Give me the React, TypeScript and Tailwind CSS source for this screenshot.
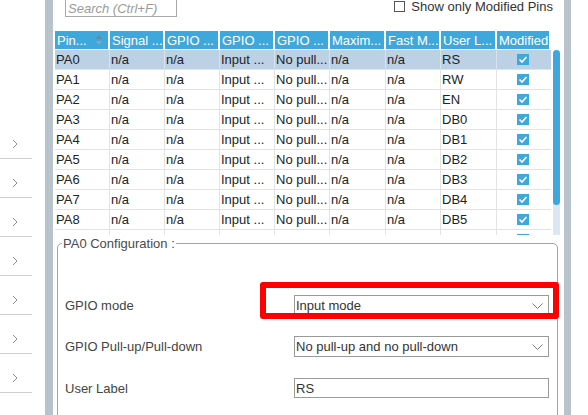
import React from 'react';

const COLS = [55, 55, 55, 55, 55, 56, 55, 56, 54];
const HEADERS = ['Pin...', 'Signal ...', 'GPIO ...', 'GPIO ...', 'GPIO ...', 'Maxim...', 'Fast M...', 'User L...', 'Modified'];

const PINS: [string, string][] = [
  ['PA0', 'RS'],
  ['PA1', 'RW'],
  ['PA2', 'EN'],
  ['PA3', 'DB0'],
  ['PA4', 'DB1'],
  ['PA5', 'DB2'],
  ['PA6', 'DB3'],
  ['PA7', 'DB4'],
  ['PA8', 'DB5'],
  ['PA9', 'DB6'],
];

function Chevron() {
  return (
    <svg width="6" height="10" viewBox="0 0 6 10" fill="none" stroke="#8c8c8c" strokeWidth="1">
      <polyline points="1,1 5,5 1,9" />
    </svg>
  );
}

function Sidebar() {
  return (
    <div className="w-[45px] shrink-0 bg-white pt-[120px]">
      {Array.from({ length: 7 }).map((_, i) => (
        <div key={i} className="h-[39px] w-[32px] border-b border-[#cfcfcf] pl-[12px] pt-[19px]">
          <Chevron />
        </div>
      ))}
    </div>
  );
}

function CheckedBox() {
  return (
    <span className="flex h-[11px] w-[12px] items-center justify-center bg-[#3ea8dc]">
      <svg width="10" height="9" viewBox="0 0 10 9" fill="none" stroke="white" strokeWidth="1.6">
        <polyline points="1.5,4.5 4,7 8.5,2" />
      </svg>
    </span>
  );
}

function Toolbar() {
  return (
    <div className="flex h-[31px] shrink-0 items-start justify-between pr-[11px]">
      <div className="ml-[10px] mt-[-5px] flex h-[22px] w-[112px] items-end border border-[#a9a9a9] pb-[1px] pl-[2px] italic text-[#9b9b9b]">
        Search (Ctrl+F)
      </div>
      <label className="mt-[-1px] flex items-center gap-[6px] text-[#333]">
        <span className="h-[11px] w-[11px] border border-[#555] bg-white" />
        <span className="mt-[1px]">Show only Modified Pins</span>
      </label>
    </div>
  );
}

function PinTable() {
  return (
    <div className="flex h-[204px] shrink-0 overflow-hidden">
      <div className="w-[496px] shrink-0">
        <div className="mb-[1px] flex h-[18px]">
          {HEADERS.map((h, i) => (
            <div
              key={i}
              style={{ width: COLS[i] }}
              className="flex shrink-0 items-center overflow-hidden whitespace-nowrap border-r-[2px] border-white bg-[#3ea8dc] pl-[2px] text-white"
            >
              {h}
              {i === 0 && (
                <svg className="ml-auto mr-[6px]" width="6" height="11" viewBox="0 0 6 11">
                  <polygon points="3,0 6,4 0,4" fill="#6f8797" />
                  <polygon points="0,6 6,6 3,10" fill="#8fa3b2" />
                </svg>
              )}
            </div>
          ))}
        </div>
        {PINS.map(([pin, label], r) => {
          const cells = [pin, 'n/a', 'n/a', 'Input ...', 'No pull...', 'n/a', 'n/a', label];
          const selected = r === 0;
          const last = r === PINS.length - 1;
          return (
            <div key={pin} className={last ? 'h-[5px] overflow-hidden' : ''}>
              <div className={`flex h-[20px] border-b border-[#e3e3e3] ${selected ? 'bg-[#bcd0e6]' : 'bg-white'}`}>
                {cells.map((c, i) => (
                  <div
                    key={i}
                    style={{ width: COLS[i] }}
                    className={`flex shrink-0 items-center overflow-hidden whitespace-nowrap border-r pl-[1px] ${selected ? 'border-[#d6e2ee]' : 'border-[#e3e3e3]'}`}
                  >
                    {c}
                  </div>
                ))}
                <div style={{ width: COLS[8] }} className="flex shrink-0 items-center justify-center pr-[2px]">
                  <CheckedBox />
                </div>
              </div>
            </div>
          );
        })}
      </div>
      <div className="ml-[2px] w-[7px] shrink-0 pt-[19px]">
        <div className="h-[200px] rounded-t-full bg-[#dbe8f4]">
          <div className="h-[155px] rounded-full bg-[#3ea8dc]" />
        </div>
      </div>
    </div>
  );
}

function DownArrow() {
  return (
    <svg width="11" height="6" viewBox="0 0 11 6" fill="none" stroke="#7a7a7a" strokeWidth="1">
      <polyline points="0.5,0.5 5.5,5.5 10.5,0.5" />
    </svg>
  );
}

function Config() {
  return (
    <fieldset className="ml-[2px] mt-[2px] w-[501px] shrink-0 rounded-[5px] border border-[#a3a3a3] pb-[40px]">
      <legend className="ml-[4px] px-[1px] leading-none text-[#4a4a4a]">PA0 Configuration :</legend>
      <div className="pl-[7px] pt-[45px] text-[#444]">
        <div className="relative flex h-[21px] items-center">
          <span className="w-[229px] shrink-0">GPIO mode</span>
          <div className="flex h-[21px] w-[255px] items-center justify-between border border-[#9a9a9a] bg-white pl-[1px] pr-[5px] text-[#333]">
            Input mode
            <DownArrow />
          </div>
          <div className="pointer-events-none absolute left-[195px] top-[-13px] h-[37px] w-[299px] rounded-[3px] border-[6px] border-[#ff0000]" />
        </div>
        <div className="mt-[20px] flex h-[21px] items-center">
          <span className="w-[229px] shrink-0">GPIO Pull-up/Pull-down</span>
          <div className="flex h-[21px] w-[255px] items-center justify-between border border-[#9a9a9a] bg-white pl-[1px] pr-[5px] text-[#333]">
            No pull-up and no pull-down
            <DownArrow />
          </div>
        </div>
        <div className="mt-[21px] flex h-[20px] items-center">
          <span className="w-[229px] shrink-0">User Label</span>
          <div className="flex h-[20px] w-[255px] items-center border border-[#9a9a9a] bg-white pl-[1px] text-[#333]">
            RS
          </div>
        </div>
      </div>
    </fieldset>
  );
}

export default function App() {
  return (
    <div className="flex h-[415px] w-[588px] overflow-hidden bg-white font-['Liberation_Sans',Arial,sans-serif] text-[13px] leading-none text-[#222]">
      <Sidebar />
      <div className="w-[8px] shrink-0 bg-[#b9c3cb]" />
      <main className="flex w-[511px] shrink-0 flex-col pl-[2px]">
        <Toolbar />
        <PinTable />
        <Config />
      </main>
      <div className="w-[7px] shrink-0 bg-[#b9c3cb]" />
      <div className="flex-1 bg-white" />
    </div>
  );
}
